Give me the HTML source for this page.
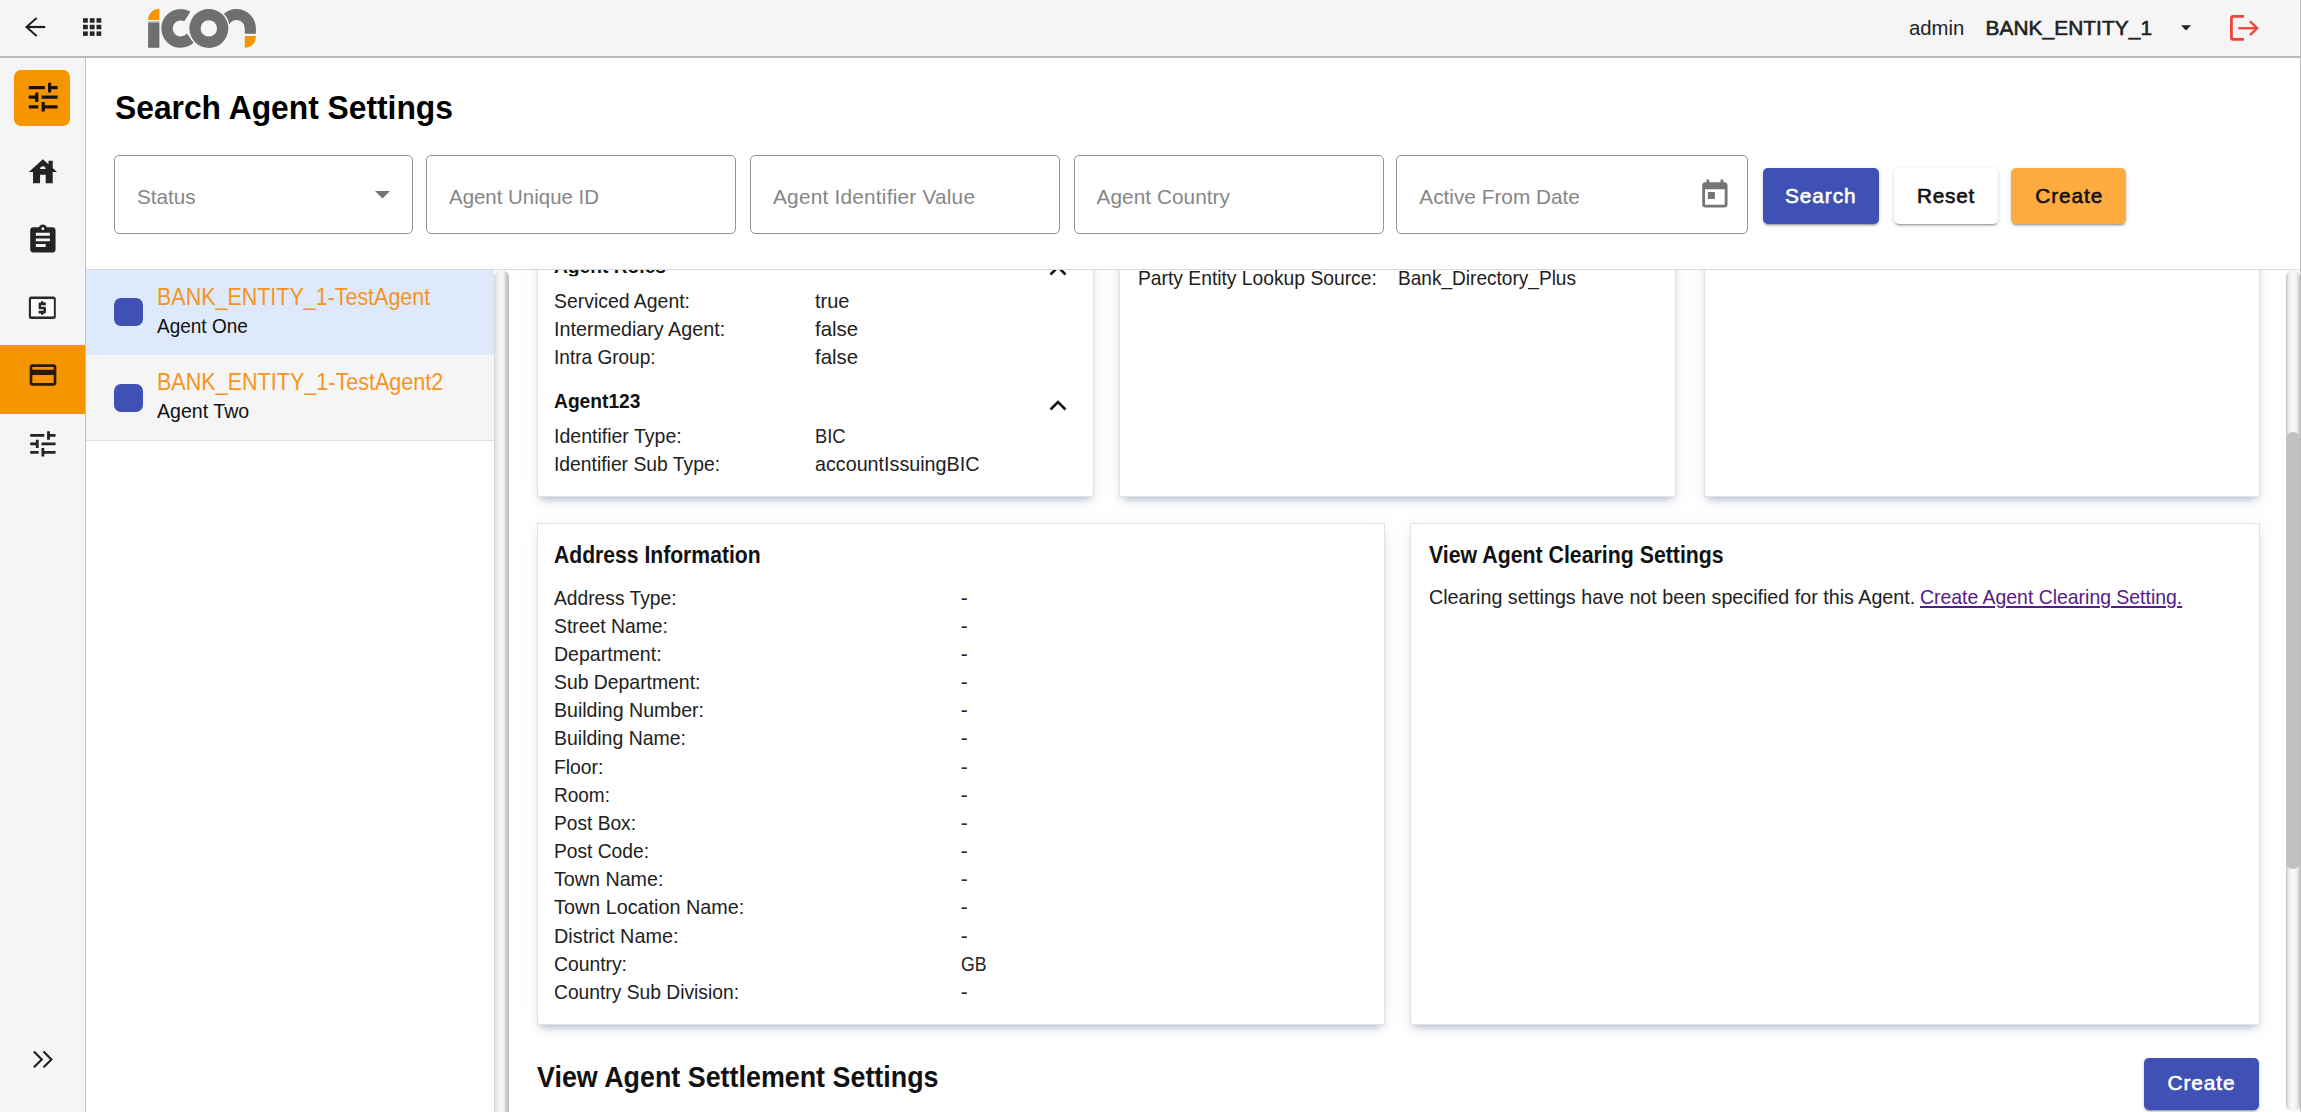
<!DOCTYPE html>
<html lang="en"><head><meta charset="utf-8"><title>Search Agent Settings</title>
<style>
html,body{margin:0;padding:0;}
body{width:2301px;height:1112px;overflow:hidden;position:relative;background:#fff;font-family:"Liberation Sans",Arial,sans-serif;}
.abs,.t{position:absolute;}
.t{white-space:nowrap;line-height:1;transform-origin:0 0;}
#hdr{left:0;top:0;width:2301px;height:56px;background:#f5f5f5;border-bottom:2px solid #b9b9b9;}
#side{left:0;top:58px;width:85px;height:1054px;background:#f5f5f5;border-right:1px solid #c0c0c0;}
#rborder{left:2300px;top:0;width:1px;height:1112px;background:#bdbdbd;}
.field{top:155px;height:77px;border:1px solid #949494;border-radius:5px;background:#fff;}
.btn{border-radius:5px;box-shadow:0 3px 1px -2px rgba(0,0,0,.2),0 2px 2px 0 rgba(0,0,0,.14),0 1px 5px 0 rgba(0,0,0,.12);}
.card{background:#fff;border:1px solid #dfe1ea;box-shadow:0 6px 8px -4px rgba(90,105,140,.45),0 2px 16px rgba(120,130,165,.10);box-sizing:border-box;}
#content{left:86px;top:270px;width:2214px;height:842px;overflow:hidden;}
.sq{width:29px;height:28px;border-radius:7px;background:#3f51b5;}

</style></head><body>
<div class="abs" id="hdr"></div>
<div class="abs" id="side"></div>
<div class="abs" id="rborder"></div>

<!-- header icons -->
<svg class="abs" style="left:20px;top:12px" width="32" height="32" viewBox="20 12 32 32"><path d="M27 27H45.200" fill="none" stroke="#1d1d1d" stroke-width="2.200"/><path d="M36.700 18L26.400 27l10.300 9" fill="none" stroke="#1d1d1d" stroke-width="1.900"/></svg>
<svg class="abs" style="left:80px;top:14px" width="26" height="26" viewBox="80 14 26 26"><g fill="#262626"><rect x="83" y="18.200" width="4.800" height="4.500"/><rect x="89.800" y="18.200" width="4.800" height="4.500"/><rect x="96.500" y="18.200" width="4.800" height="4.500"/><rect x="83" y="24.800" width="4.800" height="4.500"/><rect x="89.800" y="24.800" width="4.800" height="4.500"/><rect x="96.500" y="24.800" width="4.800" height="4.500"/><rect x="83" y="31.400" width="4.800" height="4.500"/><rect x="89.800" y="31.400" width="4.800" height="4.500"/><rect x="96.500" y="31.400" width="4.800" height="4.500"/></g></svg>

<!-- logo -->
<svg class="abs" style="left:140px;top:0" width="124" height="56" viewBox="140 0 124 56">
  <path d="M159.400 8.700A11.300 11.200 0 0 0 148.100 19.900H159.400z" fill="#f59600"/>
  <rect x="148.100" y="21.100" width="11.300" height="1.700" fill="#bcbcbc"/>
  <rect x="148.100" y="22.700" width="11.300" height="25.100" fill="#6f6f6f"/>
  <path d="M190.40 11.60A19.4 19.4 0 1 0 193.93 42.59L186.83 33.54A8.0 8.0 0 1 1 184.33 21.27Z" fill="#6f6f6f"/>
  <path d="M217.10 28.4A19.4 19.4 0 0 1 255.90 28.4V33.800H244.80V28.4A8.3 8.3 0 0 0 228.20 28.4Z" fill="#6f6f6f"/>
  <circle cx="208.85" cy="28.4" r="20.900" fill="#f5f5f5"/>
  <path d="M189.35 28.4a19.5 19.5 0 1 0 39.0 0a19.5 19.5 0 1 0 -39.0 0zM200.65 28.4a8.2 8.2 0 1 1 16.4 0a8.2 8.2 0 1 1 -16.4 0z" fill="#6f6f6f" fill-rule="evenodd"/>
  <path d="M244.800 36H255.900V36.700A11.100 11.100 0 0 1 244.800 47.800z" fill="#f59600"/>
</svg>

<!-- header right -->
<svg class="abs" style="left:2181px;top:25px" width="10" height="6" viewBox="0 0 10 6"><path d="M0 0.200h10L5 5.400z" fill="#222"/></svg>
<svg class="abs" style="left:2226px;top:10px" width="36" height="36" viewBox="2226 10 36 36"><path d="M2244 16.400H2233.400a2 2 0 0 0-2 2V37.400a2 2 0 0 0 2 2H2244" fill="none" stroke="#f44336" stroke-width="2.800"/><path d="M2238.300 28.200H2257" fill="none" stroke="#f44336" stroke-width="2.300"/><path d="M2250 21.300l7.200 6.900-7.200 6.900" fill="none" stroke="#f44336" stroke-width="2.300"/></svg>

<!-- sidebar -->
<div class="abs" style="left:14px;top:70px;width:56px;height:56px;border-radius:7px;background:#f59600"></div>
<svg class="abs" style="left:24.1px;top:78.1px" width="38.4" height="38.4" viewBox="0 0 24 24"><path d="M3 17v2h6v-2H3zM3 5v2h10V5H3zm10 16v-2h8v-2h-8v-2h-2v6h2zM7 9v2H3v2h4v2h2V9H7zm14 4v-2H11v2h10zm-6-4h2V7h4V5h-4V3h-2v6z" fill="#1a1208"/></svg>
<svg class="abs" style="left:25.6px;top:155.4px" width="33.75" height="33.75" viewBox="0 0 24 24"><path d="M19 9.300V4h-3v2.600L12 3 2 12h3v8h5v-6h4v6h5v-8h3l-3-2.700zM10 10c0-1.100.9-2 2-2s2 .9 2 2h-4z" fill="#242424"/></svg>
<svg class="abs" style="left:25.6px;top:222.9px" width="33.75" height="33.75" viewBox="0 0 24 24"><path d="M19 3h-4.180C14.400 1.840 13.300 1 12 1s-2.400.84-2.820 2H5c-1.100 0-2 .9-2 2v14c0 1.100.9 2 2 2h14c1.100 0 2-.9 2-2V5c0-1.100-.9-2-2-2zm-7 0c.55 0 1 .45 1 1s-.45 1-1 1-1-.45-1-1 .45-1 1-1zm2 14H7v-2h7v2zm3-4H7v-2h10v2zm0-4H7V7h10v2z" fill="#242424"/></svg>
<svg class="abs" style="left:24px;top:290px" width="38" height="36" viewBox="24 290 38 36"><path d="M31.350 296.400H53.300a2.500 2.500 0 0 1 2.500 2.500V316.600a2.500 2.500 0 0 1-2.500 2.500H31.350a2.500 2.500 0 0 1-2.500-2.500V298.900a2.500 2.500 0 0 1 2.500-2.500zM31.050 299.300V316.300H53.600V299.300z" fill="#2a2a2a" fill-rule="evenodd"/><rect x="31.050" y="299.300" width="22.550" height="17" fill="#fbfbfb"/><path d="M11 17h2v-1h1c.55 0 1-.45 1-1v-3c0-.55-.45-1-1-1h-3v-1h4V8h-2V7h-2v1h-1c-.55 0-1 .45-1 1v3c0 .55.45 1 1 1h3v1H9v2h2v1z" fill="#262626" transform="translate(27.650 291.680) scale(1.2167 1.3600)"/></svg>
<div class="abs" style="left:0;top:345px;width:85px;height:69px;background:#f59600"></div>
<svg class="abs" style="left:26.550px;top:359.400px" width="32" height="32" viewBox="0 0 24 24"><path d="M20 4H4c-1.110 0-1.990.89-1.990 2L2 18c0 1.110.89 2 2 2h16c1.110 0 2-.89 2-2V6c0-1.110-.89-2-2-2zm0 14H4v-6h16v6zm0-10H4V6h16v2z" fill="#2a1a05"/></svg>
<svg class="abs" style="left:25.6px;top:427.0px" width="33.75" height="33.75" viewBox="0 0 24 24"><path d="M3 17v2h6v-2H3zM3 5v2h10V5H3zm10 16v-2h8v-2h-8v-2h-2v6h2zM7 9v2H3v2h4v2h2V9H7zm14 4v-2H11v2h10zm-6-4h2V7h4V5h-4V3h-2v6z" fill="#242424"/></svg>
<svg class="abs" style="left:28px;top:1045px" width="30" height="30" viewBox="28 1045 30 30"><path d="M33.900 1051.600l7.900 7.800-7.900 7.800M43.500 1051.600l7.900 7.800-7.900 7.800" fill="none" stroke="#1c1c1c" stroke-width="2.100"/></svg>

<!-- search fields -->
<div class="abs field" style="left:114px;width:297px"></div>
<div class="abs field" style="left:426px;width:308px"></div>
<div class="abs field" style="left:750px;width:308px"></div>
<div class="abs field" style="left:1074px;width:308px"></div>
<div class="abs field" style="left:1396px;width:350px"></div>
<svg class="abs" style="left:375px;top:191px" width="15" height="8" viewBox="0 0 15 8"><path d="M0 0h15L7.500 7.500z" fill="#757575"/></svg>
<svg class="abs" style="left:1697.700px;top:178.100px" width="33.750" height="33.750" viewBox="0 0 24 24"><path d="M19 3h-1V1h-2v2H8V1H6v2H5c-1.110 0-1.990.9-1.990 2L3 19c0 1.100.89 2 2 2h14c1.100 0 2-.9 2-2V5c0-1.100-.9-2-2-2zm0 16H5V8h14v11zM7 10h5v5H7z" fill="#757575"/></svg>
<div class="abs btn" style="left:1763px;top:168px;width:116px;height:56px;background:#3f51b5"></div>
<div class="abs btn" style="left:1894px;top:168px;width:104px;height:56px;background:#fff"></div>
<div class="abs btn" style="left:2011px;top:168px;width:115px;height:56px;background:#ffab40"></div>

<!-- content -->
<div class="abs" style="left:86px;top:269px;width:2214px;height:1px;background:#dadada"></div>
<div class="abs" id="content">
  <!-- coordinates inside are relative to (86,270) -->
  <div class="abs" style="left:0;top:0;width:408px;height:84.500px;background:#deeafc"></div>
  <div class="abs" style="left:0;top:84.500px;width:408px;height:86px;background:#f5f5f5;border-bottom:1px solid #e0e0e0;box-sizing:border-box"></div>
  <div class="abs sq" style="left:28px;top:28px"></div>
  <div class="abs sq" style="left:28px;top:114px"></div>
  <!-- splitter -->
  <div class="abs" style="left:408px;top:0;width:14.600px;height:860px;border-radius:7.300px 7.300px 0 0;background:linear-gradient(90deg,#cdcdcd 0,#e2e2e2 1.200px,#efefef 4px,#f7f7f7 7.500px,#f0f0f0 10px,#d6d6d6 11.500px,#c8c8c8 12.500px,#c3c3c3 14.600px)"></div>
  <!-- cards row 1 (start above the clip) -->
  <div class="abs card" style="left:451px;top:-200px;width:557px;height:427px"></div>
  <div class="abs card" style="left:1033px;top:-200px;width:557px;height:427px"></div>
  <div class="abs card" style="left:1618px;top:-200px;width:556px;height:427px"></div>
  <!-- cards row 2 -->
  <div class="abs card" style="left:451px;top:253px;width:848px;height:502px"></div>
  <div class="abs card" style="left:1324px;top:253px;width:850px;height:502px"></div>
  <!-- chevrons -->
  <svg class="abs" style="left:962px;top:-6.800px" width="20" height="14" viewBox="0 0 20 14"><path d="M2.500 11.500L10 4l7.500 7.500" fill="none" stroke="#111" stroke-width="2.600"/></svg>
  <svg class="abs" style="left:962px;top:128.200px" width="20" height="14" viewBox="0 0 20 14"><path d="M2.500 11.500L10 4l7.500 7.500" fill="none" stroke="#111" stroke-width="2.600"/></svg>
  <!-- bottom create -->
  <div class="abs btn" style="left:2058px;top:788px;width:115px;height:52px;background:#3f51b5"></div>
  <!-- scrollbar -->
  <div class="abs" style="left:2200px;top:0;width:14px;height:842px;border-radius:7px;background:linear-gradient(90deg,#bfbfbf 0,#e4e4e4 2px,#f3f3f3 4px,#fafafa 7px,#efefef 10.500px,#dcdcdc 12.500px,#b8b8b8 14px)"></div>
  <div class="abs" style="left:2200px;top:162px;width:14px;height:437px;border-radius:7px;background:#c1c1c1"></div>
</div>

<div id="texts">
<span class="t" style="left:1909.00px;top:18.02px;font-size:20.8px;color:#222;transform:scaleX(0.9761);">admin</span>
<span class="t" style="left:1985.50px;top:18.02px;font-size:20.8px;color:#222;letter-spacing:0.102px;-webkit-text-stroke:.6px currentColor;">BANK_ENTITY_1</span>
<span class="t" style="left:115.00px;top:90.50px;font-size:33.28px;color:#000;font-weight:700;transform:scaleX(0.9556);">Search Agent Settings</span>
<span class="t" style="left:137.00px;top:187.02px;font-size:20.8px;color:#868686;transform:scaleX(0.9937);">Status</span>
<span class="t" style="left:449.00px;top:187.02px;font-size:20.8px;color:#868686;transform:scaleX(0.9829);">Agent Unique ID</span>
<span class="t" style="left:773.00px;top:187.02px;font-size:20.8px;color:#868686;letter-spacing:0.222px;">Agent Identifier Value</span>
<span class="t" style="left:1096.60px;top:187.02px;font-size:20.8px;color:#868686;letter-spacing:0.037px;">Agent Country</span>
<span class="t" style="left:1419.30px;top:187.02px;font-size:20.8px;color:#868686;">Active From Date</span>
<span class="t" style="left:1785.00px;top:186.02px;font-size:20.8px;color:#fff;letter-spacing:0.939px;-webkit-text-stroke:.6px currentColor;">Search</span>
<span class="t" style="left:1917.00px;top:186.02px;font-size:20.8px;color:#111;letter-spacing:0.768px;-webkit-text-stroke:.6px currentColor;">Reset</span>
<span class="t" style="left:2035.30px;top:186.02px;font-size:20.8px;color:#111;letter-spacing:0.896px;-webkit-text-stroke:.6px currentColor;">Create</span>
<span class="t" style="left:157.20px;top:285.91px;font-size:23.4px;color:#f5941d;transform:scaleX(0.9176);">BANK_ENTITY_1-TestAgent</span>
<span class="t" style="left:157.20px;top:315.71px;font-size:20.8px;color:#111;transform:scaleX(0.9131);">Agent One</span>
<span class="t" style="left:157.20px;top:371.31px;font-size:23.4px;color:#f5941d;transform:scaleX(0.9211);">BANK_ENTITY_1-TestAgent2</span>
<span class="t" style="left:157.20px;top:400.52px;font-size:20.8px;color:#111;transform:scaleX(0.9417);">Agent Two</span>
<span class="t" style="left:554.00px;top:255.52px;font-size:20.8px;color:#111;font-weight:700;transform:scaleX(0.9230);clip-path:inset(14.48px 0 0 0);">Agent Roles</span>
<span class="t" style="left:554.00px;top:291.02px;font-size:20.8px;color:#212121;transform:scaleX(0.9336);">Serviced Agent:</span>
<span class="t" style="left:814.60px;top:291.02px;font-size:20.8px;color:#212121;transform:scaleX(0.9597);">true</span>
<span class="t" style="left:554.00px;top:319.11px;font-size:20.8px;color:#212121;transform:scaleX(0.9493);">Intermediary Agent:</span>
<span class="t" style="left:814.60px;top:319.11px;font-size:20.8px;color:#212121;transform:scaleX(0.9809);">false</span>
<span class="t" style="left:554.00px;top:347.21px;font-size:20.8px;color:#212121;transform:scaleX(0.9154);">Intra Group:</span>
<span class="t" style="left:814.60px;top:347.21px;font-size:20.8px;color:#212121;transform:scaleX(0.9809);">false</span>
<span class="t" style="left:554.00px;top:390.52px;font-size:20.8px;color:#111;font-weight:700;transform:scaleX(0.9239);">Agent123</span>
<span class="t" style="left:554.00px;top:426.02px;font-size:20.8px;color:#212121;transform:scaleX(0.9386);">Identifier Type:</span>
<span class="t" style="left:814.60px;top:426.02px;font-size:20.8px;color:#212121;transform:scaleX(0.8826);">BIC</span>
<span class="t" style="left:554.00px;top:454.11px;font-size:20.8px;color:#212121;transform:scaleX(0.9283);">Identifier Sub Type:</span>
<span class="t" style="left:814.60px;top:454.11px;font-size:20.8px;color:#212121;transform:scaleX(0.9481);">accountIssuingBIC</span>
<span class="t" style="left:1137.80px;top:268.02px;font-size:20.8px;color:#212121;transform:scaleX(0.9263);">Party Entity Lookup Source:</span>
<span class="t" style="left:1398.00px;top:268.02px;font-size:20.8px;color:#212121;transform:scaleX(0.9166);">Bank_Directory_Plus</span>
<span class="t" style="left:554.40px;top:544.00px;font-size:23.4px;color:#111;font-weight:700;transform:scaleX(0.9032);">Address Information</span>
<span class="t" style="left:554.00px;top:587.52px;font-size:20.8px;color:#212121;transform:scaleX(0.9241);">Address Type:</span>
<span class="t" style="left:960.70px;top:587.52px;font-size:20.8px;color:#212121;">-</span>
<span class="t" style="left:554.00px;top:615.69px;font-size:20.8px;color:#212121;transform:scaleX(0.9304);">Street Name:</span>
<span class="t" style="left:960.70px;top:615.69px;font-size:20.8px;color:#212121;">-</span>
<span class="t" style="left:554.00px;top:643.85px;font-size:20.8px;color:#212121;transform:scaleX(0.9403);">Department:</span>
<span class="t" style="left:960.70px;top:643.85px;font-size:20.8px;color:#212121;">-</span>
<span class="t" style="left:554.00px;top:672.02px;font-size:20.8px;color:#212121;transform:scaleX(0.9312);">Sub Department:</span>
<span class="t" style="left:960.70px;top:672.02px;font-size:20.8px;color:#212121;">-</span>
<span class="t" style="left:554.00px;top:700.19px;font-size:20.8px;color:#212121;transform:scaleX(0.9403);">Building Number:</span>
<span class="t" style="left:960.70px;top:700.19px;font-size:20.8px;color:#212121;">-</span>
<span class="t" style="left:554.00px;top:728.36px;font-size:20.8px;color:#212121;transform:scaleX(0.9360);">Building Name:</span>
<span class="t" style="left:960.70px;top:728.36px;font-size:20.8px;color:#212121;">-</span>
<span class="t" style="left:554.00px;top:756.53px;font-size:20.8px;color:#212121;transform:scaleX(0.9291);">Floor:</span>
<span class="t" style="left:960.70px;top:756.53px;font-size:20.8px;color:#212121;">-</span>
<span class="t" style="left:554.00px;top:784.69px;font-size:20.8px;color:#212121;transform:scaleX(0.9141);">Room:</span>
<span class="t" style="left:960.70px;top:784.69px;font-size:20.8px;color:#212121;">-</span>
<span class="t" style="left:554.00px;top:812.86px;font-size:20.8px;color:#212121;transform:scaleX(0.9212);">Post Box:</span>
<span class="t" style="left:960.70px;top:812.86px;font-size:20.8px;color:#212121;">-</span>
<span class="t" style="left:554.00px;top:841.05px;font-size:20.8px;color:#212121;transform:scaleX(0.9233);">Post Code:</span>
<span class="t" style="left:960.70px;top:841.05px;font-size:20.8px;color:#212121;">-</span>
<span class="t" style="left:554.00px;top:869.21px;font-size:20.8px;color:#212121;transform:scaleX(0.9464);">Town Name:</span>
<span class="t" style="left:960.70px;top:869.21px;font-size:20.8px;color:#212121;">-</span>
<span class="t" style="left:554.00px;top:897.38px;font-size:20.8px;color:#212121;transform:scaleX(0.9515);">Town Location Name:</span>
<span class="t" style="left:960.70px;top:897.38px;font-size:20.8px;color:#212121;">-</span>
<span class="t" style="left:554.00px;top:925.55px;font-size:20.8px;color:#212121;transform:scaleX(0.9535);">District Name:</span>
<span class="t" style="left:960.70px;top:925.55px;font-size:20.8px;color:#212121;">-</span>
<span class="t" style="left:554.00px;top:953.72px;font-size:20.8px;color:#212121;transform:scaleX(0.9286);">Country:</span>
<span class="t" style="left:960.70px;top:953.72px;font-size:20.8px;color:#212121;transform:scaleX(.85);">GB</span>
<span class="t" style="left:554.00px;top:981.89px;font-size:20.8px;color:#212121;transform:scaleX(0.9251);">Country Sub Division:</span>
<span class="t" style="left:960.70px;top:981.89px;font-size:20.8px;color:#212121;">-</span>
<span class="t" style="left:1428.80px;top:544.22px;font-size:23.4px;color:#111;font-weight:700;transform:scaleX(0.9106);">View Agent Clearing Settings</span>
<span class="t" style="left:1428.80px;top:587.02px;font-size:20.8px;color:#212121;transform:scaleX(0.9472);">Clearing settings have not been specified for this Agent.</span>
<span class="t" style="left:1920.40px;top:587.02px;font-size:20.8px;color:#551a8b;transform:scaleX(0.9333);text-decoration:underline;">Create Agent Clearing Setting.</span>
<span class="t" style="left:537.30px;top:1062.41px;font-size:30.16px;color:#111;font-weight:700;transform:scaleX(0.8907);">View Agent Settlement Settings</span>
<span class="t" style="left:2167.50px;top:1072.81px;font-size:20.8px;color:#fff;letter-spacing:0.936px;-webkit-text-stroke:.6px currentColor;">Create</span>
</div>
</body></html>
